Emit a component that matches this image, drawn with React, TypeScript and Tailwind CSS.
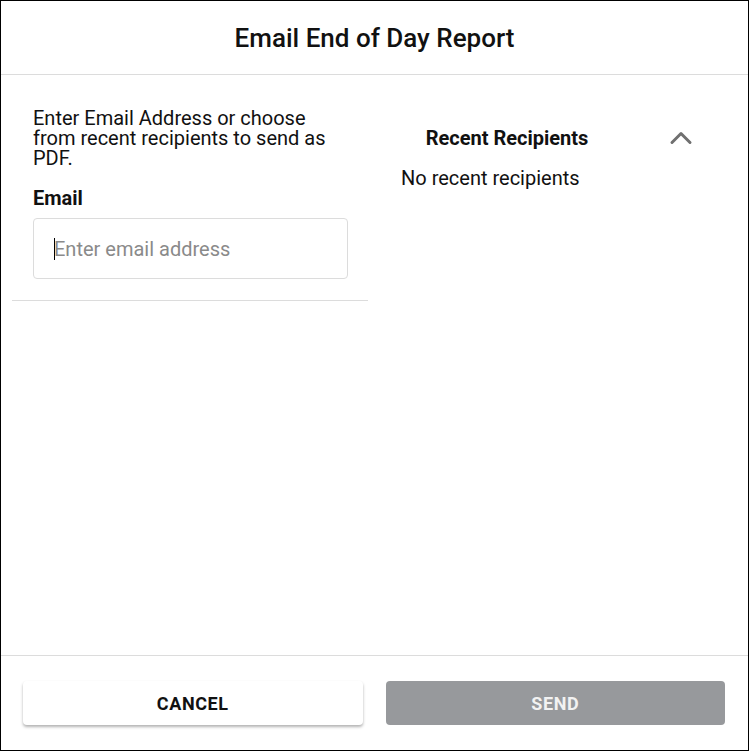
import { ChevronUp } from "lucide-react";

export default function App() {
  return (
    <div className="w-[749px] h-[751px] border border-black bg-white flex flex-col font-['Roboto',sans-serif] text-[#111]">
      <header className="h-[74px] shrink-0 border-b border-[#dcdcdc] flex items-center justify-center">
        <h1 className="text-[26px] font-medium leading-none pt-[1px]">Email End of Day Report</h1>
      </header>

      <main className="flex-1 flex flex-row">
        <section className="ml-[11px] w-[356px] self-start border-b border-[#dcdcdc] pl-[21px] pr-[20px] pt-[33px] pb-[21px]">
          <p className="text-[20px] leading-[20px]">
            Enter Email Address or choose from recent recipients to send as PDF.
          </p>
          <label className="block mt-[20px] text-[20px] leading-[20px] font-bold">Email</label>
          <div className="relative mt-[10px] w-[315px] h-[61px] border border-[#dcdcdc] rounded-[4px] flex items-center">
            <span className="absolute left-[20px] top-[19px] w-px h-[22px] bg-black" />
            <input
              type="email"
              placeholder="Enter email address"
              className="w-full h-full pl-[20px] pr-3 bg-transparent outline-none text-[20px] placeholder:text-[#8a8a8a] caret-transparent"
            />
          </div>
        </section>

        <section className="flex-1 pl-[33px] pt-[45px]">
          <div className="flex items-center">
            <span className="w-[212px] text-center text-[20px] leading-[22px] font-bold">Recent Recipients</span>
            <ChevronUp className="ml-[50px] w-[36px] h-[36px] text-[#707070]" strokeWidth={2} />
          </div>
          <p className="mt-[11px] text-[20px] leading-[22px]">No recent recipients</p>
        </section>
      </main>

      <footer className="h-[95px] shrink-0 border-t border-[#dcdcdc] pt-[25px] pl-[22px] pr-[23px] flex gap-[23px]">
        <button className="flex-1 h-[44px] rounded-[4px] bg-white shadow-[0_2px_3px_rgba(0,0,0,0.3)] text-[18px] font-bold tracking-[0.6px]">
          CANCEL
        </button>
        <button className="flex-1 h-[44px] rounded-[4px] bg-[#97999c] text-[#f2f2f2] text-[18px] font-bold tracking-[0.6px]">
          SEND
        </button>
      </footer>
    </div>
  );
}
